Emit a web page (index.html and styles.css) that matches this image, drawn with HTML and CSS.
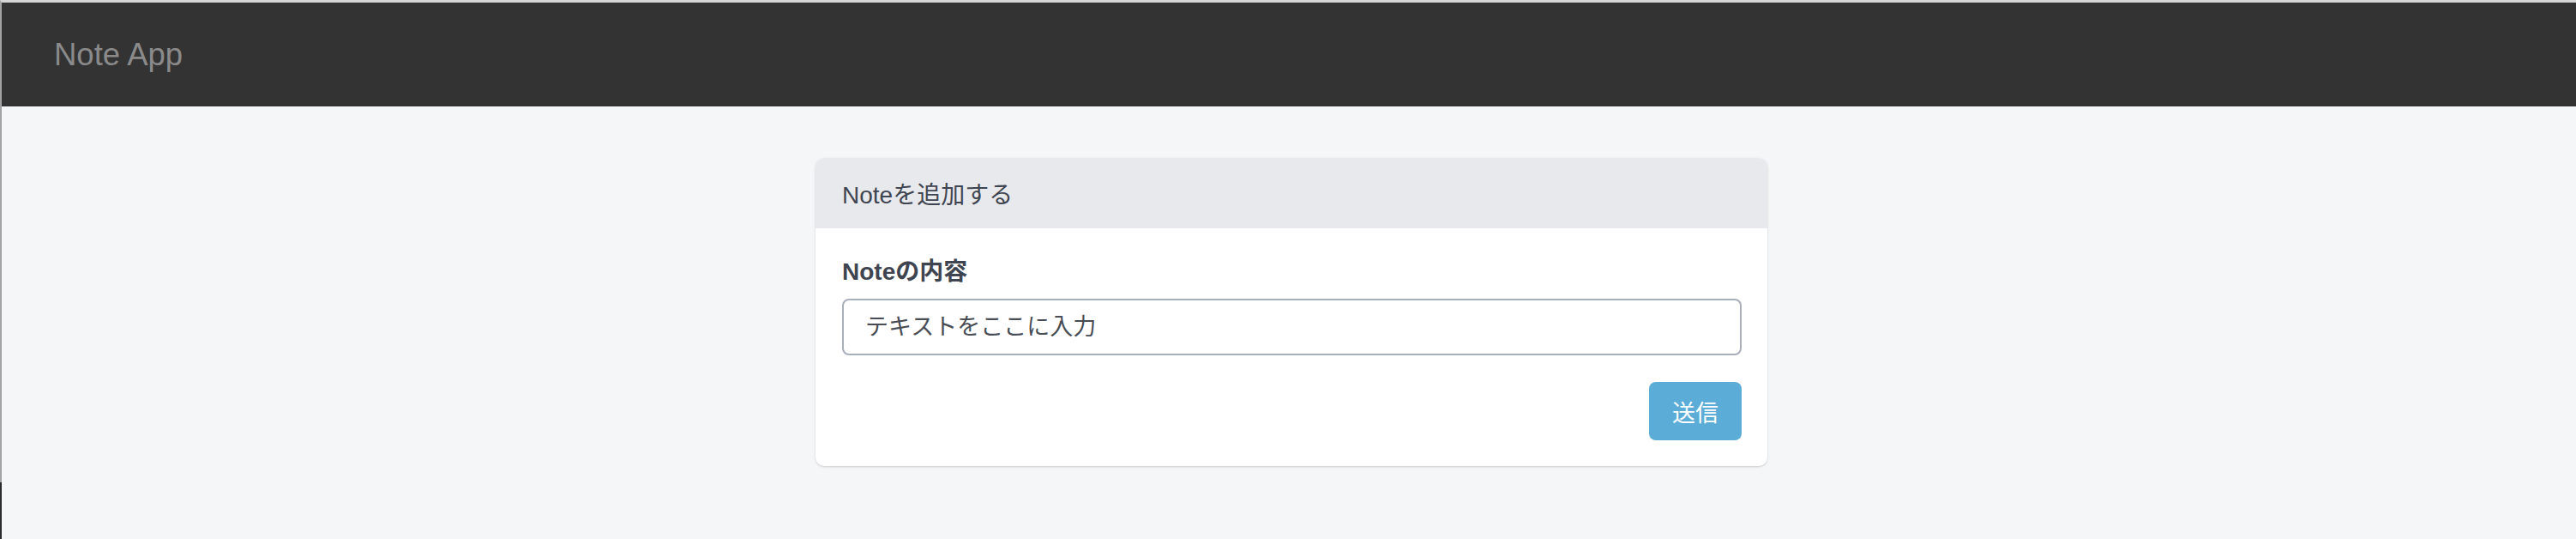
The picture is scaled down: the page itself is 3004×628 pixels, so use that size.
FILE: index.html
```html
<!DOCTYPE html>
<html lang="ja">
<head>
<meta charset="utf-8">
<title>Note App</title>
<link rel="stylesheet" href="styles.css">
</head>
<body>
<div class="frame">
  <nav class="navbar">
    <span class="brand">Note App</span>
  </nav>
  <main class="main">
    <section class="card">
      <header class="card-header">Noteを追加する</header>
      <form class="card-body">
        <label class="label" for="content">Noteの内容</label>
        <input class="input" id="content" type="text" placeholder="テキストをここに入力">
        <div class="actions">
          <button class="btn" type="button">送信</button>
        </div>
      </form>
    </section>
  </main>
</div>
</body>
</html>
```
FILE: styles.css
```css
* { box-sizing: border-box; }
html, body { margin: 0; padding: 0; }
body {
  background: #f5f6f8;
  font-family: "Liberation Sans", "Noto Sans CJK JP", sans-serif;
  color: #3f4550;
  height: 628px;
  overflow: hidden;
}
.frame {
  position: relative;
  height: 628px;
  border-top: 3px solid #d6d6d6;
  border-left: 2px solid #a3a3a3;
  background: #f5f6f8;
}
.frame::after {
  content: "";
  position: absolute;
  left: -2px;
  top: 559px;
  width: 2px;
  height: 66px;
  background: #2b2b2b;
}
.navbar {
  height: 121px;
  background: #333333;
  display: flex;
  align-items: center;
  padding-left: 61px;
}
.brand {
  font-size: 36.5px;
  color: #8a8a8a;
  line-height: 1;
  margin-top: 2px;
}
.main {
  display: flex;
  justify-content: center;
  padding-top: 60px;
  padding-left: 6px;
}
.card {
  width: 1110px;
  background: #ffffff;
  border-radius: 10px;
  box-shadow: 0 1px 3px rgba(0,0,0,0.12), 0 1px 2px rgba(0,0,0,0.06);
  overflow: hidden;
}
.card-header {
  height: 82px;
  background: #e8e9ec;
  display: flex;
  align-items: center;
  padding: 0 31px;
  font-size: 28px;
  color: #3f4550;
}
.card-body {
  padding: 31px 30px 30px 31px;
  display: flex;
  flex-direction: column;
}
.label {
  font-size: 28px;
  font-weight: bold;
  line-height: 40px;
  color: #3f4550;
}
.input {
  margin-top: 11px;
  height: 66px;
  width: 100%;
  border: 2px solid #a9aebb;
  border-radius: 8px;
  padding: 0 25px;
  font-family: "Liberation Sans", "Noto Sans CJK JP", sans-serif;
  font-size: 27px;
  color: #3f4550;
  background: #fff;
  outline: none;
}
.input::placeholder { color: #474c55; opacity: 1; }
.actions {
  display: flex;
  justify-content: flex-end;
  margin-top: 31px;
}
.btn {
  width: 108px;
  height: 68px;
  border: none;
  border-radius: 8px;
  background: #5badd8;
  color: #ffffff;
  font-family: "Liberation Sans", "Noto Sans CJK JP", sans-serif;
  font-size: 27px;
  padding: 0;
  cursor: pointer;
}
```
